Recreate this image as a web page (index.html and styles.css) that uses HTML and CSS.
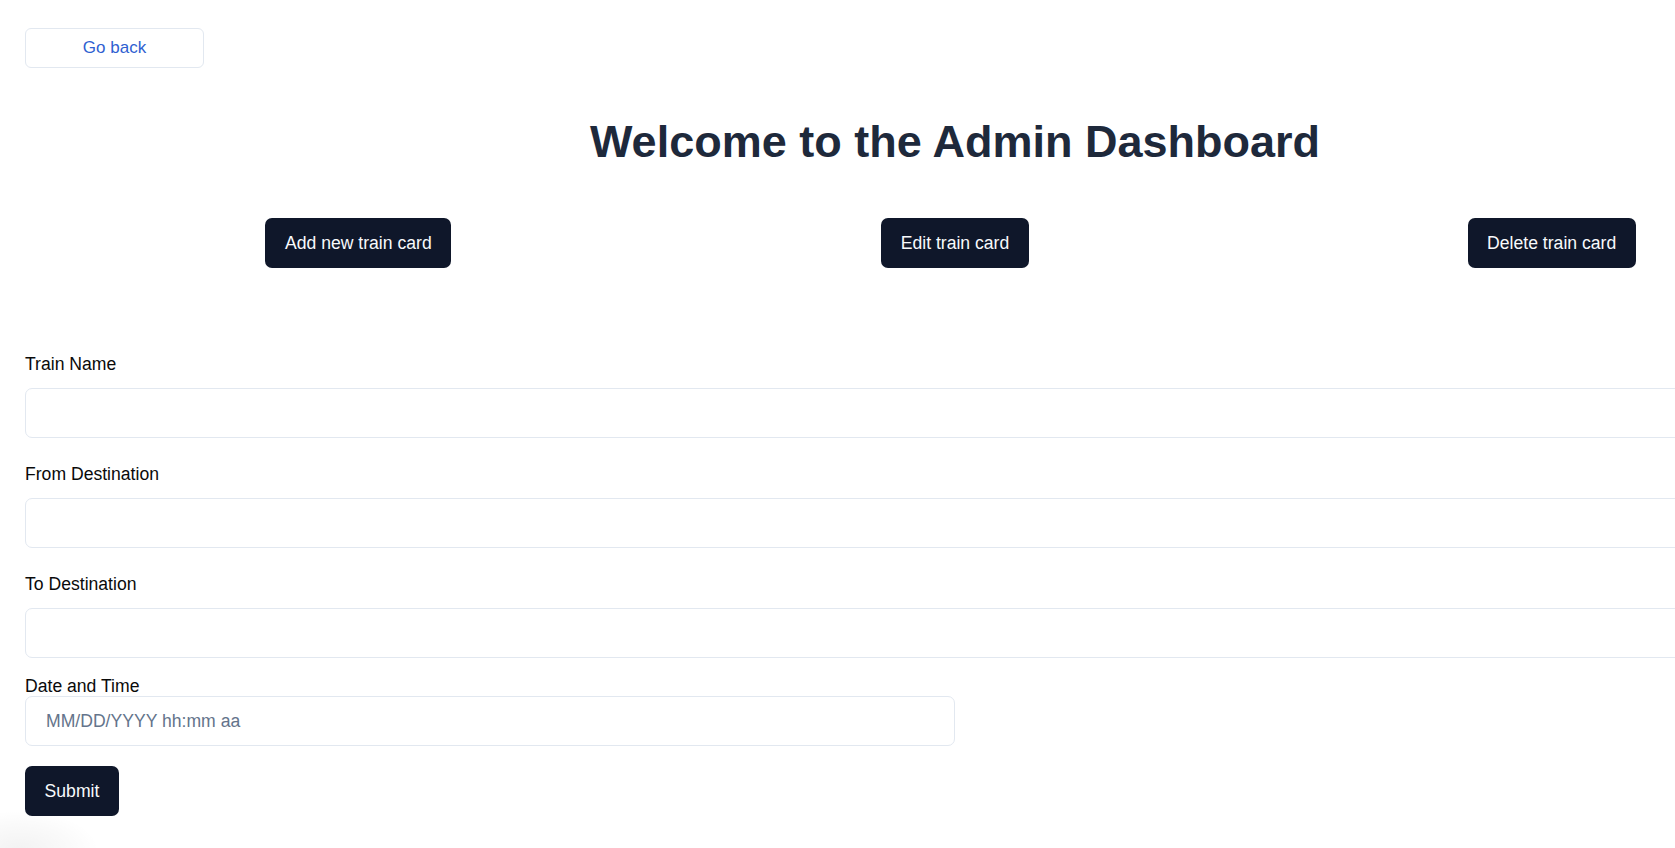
FILE: index.html
```html
<!DOCTYPE html>
<html lang="en">
<head>
<meta charset="utf-8">
<title>Admin Dashboard</title>
<link rel="stylesheet" href="styles.css">
</head>
<body>
<main class="page">
  <button class="back-btn" type="button">Go back</button>
  <h1 class="title">Welcome to the Admin Dashboard</h1>
  <div class="actions">
    <button class="dark-btn" type="button">Add new train card</button>
    <button class="dark-btn" type="button">Edit train card</button>
    <button class="dark-btn" type="button">Delete train card</button>
  </div>
  <form class="form">
    <div class="field">
      <label class="label" for="trainName">Train Name</label>
      <input class="input" id="trainName" type="text">
    </div>
    <div class="field">
      <label class="label" for="fromDest">From Destination</label>
      <input class="input" id="fromDest" type="text">
    </div>
    <div class="field">
      <label class="label" for="toDest">To Destination</label>
      <input class="input" id="toDest" type="text">
    </div>
    <div class="field field-date">
      <label class="label" for="dateTime">Date and Time</label>
      <input class="input input-half" id="dateTime" type="text" placeholder="MM/DD/YYYY hh:mm aa">
    </div>
    <button class="dark-btn submit-btn" type="button">Submit</button>
  </form>
</main>
<div class="corner-glow"></div>
</body>
</html>
```

FILE: styles.css
```css
html, body {
  margin: 0;
  padding: 0;
  background: #ffffff;
  overflow: hidden;
  height: 848px;
}

body {
  font-family: "Liberation Sans", Arial, sans-serif;
  color: #0a0a0a;
}

.page {
  width: 1860px;
  padding: 28px 0 0 25px;
  display: flex;
  flex-direction: column;
}

.back-btn {
  align-self: flex-start;
  width: 179px;
  height: 40px;
  box-sizing: border-box;
  background: #ffffff;
  border: 1px solid #e2e8f0;
  border-radius: 6px;
  color: #2f5fd1;
  font-family: "Liberation Sans", Arial, sans-serif;
  font-size: 17px;
  padding: 0;
  cursor: pointer;
}

.title {
  margin: 48px 0 0 0;
  text-align: center;
  font-size: 45px;
  line-height: 52px;
  font-weight: 700;
  color: #1e293b;
}

.actions {
  margin-top: 50px;
  padding: 0 35px;
  display: grid;
  grid-template-columns: repeat(3, 1fr);
  justify-items: center;
}

.dark-btn {
  height: 50px;
  box-sizing: border-box;
  padding: 0 19.6px;
  background: #0f172a;
  color: #f8fafc;
  border: none;
  border-radius: 7px;
  font-family: "Liberation Sans", Arial, sans-serif;
  font-size: 17.6px;
  cursor: pointer;
  white-space: nowrap;
}

.form {
  margin-top: 86px;
  display: flex;
  flex-direction: column;
}

.field {
  display: flex;
  flex-direction: column;
  margin-bottom: 26px;
}

.field-date {
  margin-top: -8px;
  margin-bottom: 20px;
}

.label {
  font-size: 17.6px;
  line-height: 20px;
  margin-bottom: 14px;
}

.field-date .label {
  margin-bottom: 0;
}

.input {
  height: 50px;
  box-sizing: border-box;
  width: 100%;
  border: 1px solid #e2e8f0;
  border-radius: 7px;
  padding: 0 20px;
  font-family: "Liberation Sans", Arial, sans-serif;
  font-size: 17.6px;
  color: #0f172a;
  background: #ffffff;
  outline: none;
}

.input::placeholder {
  color: #64748b;
}

.input-half {
  width: 930px;
}

.submit-btn {
  align-self: flex-start;
}

.corner-glow {
  position: absolute;
  left: -60px;
  top: 810px;
  width: 160px;
  height: 80px;
  border-radius: 50%;
  background: radial-gradient(ellipse at center, rgba(0,0,0,0.05) 0%, rgba(0,0,0,0.02) 45%, rgba(0,0,0,0) 70%);
  pointer-events: none;
}
```
